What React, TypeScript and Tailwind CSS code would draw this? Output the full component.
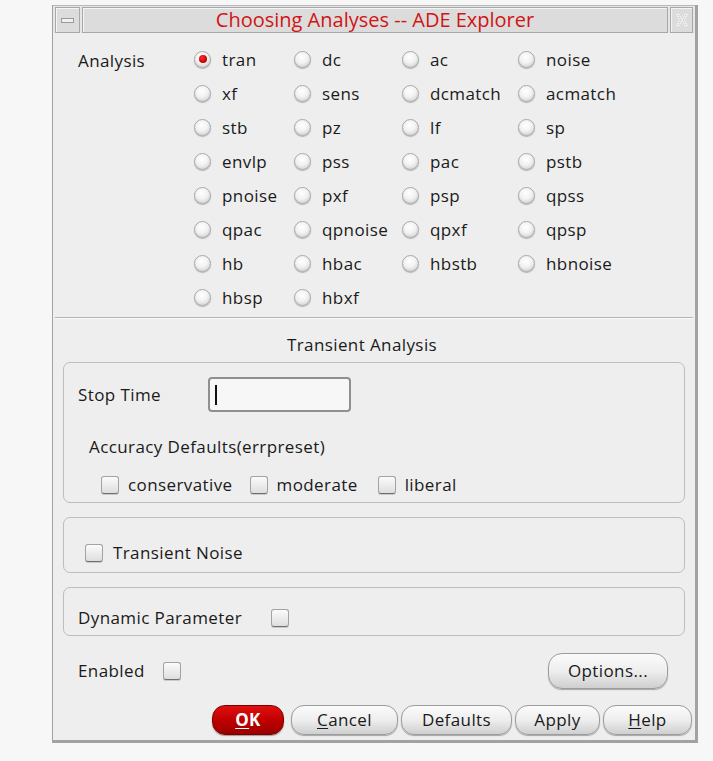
import React from "react";

const font = { fontFamily: '"Open Sans", "DejaVu Sans", sans-serif' };

const analyses = [
  ["tran", "dc", "ac", "noise"],
  ["xf", "sens", "dcmatch", "acmatch"],
  ["stb", "pz", "lf", "sp"],
  ["envlp", "pss", "pac", "pstb"],
  ["pnoise", "pxf", "psp", "qpss"],
  ["qpac", "qpnoise", "qpxf", "qpsp"],
  ["hb", "hbac", "hbstb", "hbnoise"],
  ["hbsp", "hbxf"],
];

const colWidths = ["w-[100px]", "w-[108px]", "w-[116px]", "w-[100px]"];

const Radio = ({ checked }: { checked?: boolean }) => (
  <span className="relative flex h-[17px] w-[17px] shrink-0 items-center justify-center rounded-full border border-[#a9a9a9] bg-[radial-gradient(circle_at_45%_35%,#ffffff_0%,#f2f2f2_45%,#c4c4c4_100%)] shadow-[0_1px_1px_rgba(0,0,0,0.25)]">
    {checked && (
      <span className="h-[8px] w-[8px] rounded-full bg-[radial-gradient(circle_at_40%_35%,#ff3030_0%,#d00000_60%,#900000_100%)]" />
    )}
  </span>
);

const Checkbox = () => (
  <span className="inline-block h-[18px] w-[18px] shrink-0 rounded-[3px] border border-[#a3a3a3] border-b-[#6f6f6f] bg-gradient-to-b from-[#fbfbfb] to-[#dedede] shadow-[0_1px_0_rgba(0,0,0,0.15)]" />
);

const Button = ({
  children,
  className = "",
}: {
  children: React.ReactNode;
  className?: string;
}) => (
  <button
    className={`flex h-[30px] items-center justify-center rounded-[13px] border border-[#9c9c9c] bg-gradient-to-b from-[#fbfbfb] via-[#eeeeee] to-[#cfcfcf] text-[17px] tracking-[0.4px] text-[#1a1a1a] shadow-[0_1px_1px_rgba(0,0,0,0.3)] ${className}`}
  >
    {children}
  </button>
);

export default function App() {
  return (
    <div className="min-h-screen bg-[#f7f7f7]" style={font}>
      <div className="ml-[52px] w-[646px] pt-[5px]">
        <div className="border-l border-r-[3px] border-b-[3px] border-[#a2a2a2] bg-[#eeeeee] tracking-[0.4px]">
          {/* title bar */}
          <div className="flex h-[28px] gap-[2px] border-t border-[#b8b8b8] bg-[#e6e6e6] px-[2px] pt-[1px]">
            <div className="flex w-[25px] items-center justify-center border border-[#a8a8a8] bg-[#dcdcdc] shadow-[inset_1px_1px_0_#f4f4f4]">
              <span className="h-[5px] w-[13px] border border-[#9a9a9a] bg-[#f0f0f0]" />
            </div>
            <div className="flex flex-1 items-center justify-center border border-[#a8a8a8] bg-[#dcdcdc] text-[20px] tracking-normal text-[#d11414] shadow-[inset_1px_1px_0_#f4f4f4]">
              Choosing Analyses -- ADE Explorer
            </div>
            <div className="flex w-[23px] items-center justify-center border border-[#a8a8a8] bg-[#dcdcdc] shadow-[inset_1px_1px_0_#f4f4f4]">
              <svg width="12" height="14" viewBox="0 0 12 14">
                <path d="M2 2 C5 5 5 9 2 12 M10 2 C7 5 7 9 10 12" stroke="#f4f4f4" strokeWidth="3" fill="none" strokeLinecap="round" />
                <path d="M2 2 C5 5 5 9 2 12 M10 2 C7 5 7 9 10 12" stroke="#b8b8b8" strokeWidth="1" fill="none" strokeDasharray="1.5 1" />
              </svg>
            </div>
          </div>

          {/* analysis radios */}
          <div className="flex pt-[9px]">
            <div className="w-[141px] pl-[25px] pt-[6px] text-[17px] text-[#1a1a1a]">Analysis</div>
            <div className="flex flex-col">
              {analyses.map((row, r) => (
                <div key={r} className="flex h-[34px] items-center">
                  {row.map((name, c) => (
                    <div key={name} className={`flex items-center gap-[11px] ${colWidths[c]}`}>
                      <Radio checked={name === "tran"} />
                      <span className="text-[17px] leading-none text-[#1a1a1a]">{name}</span>
                    </div>
                  ))}
                </div>
              ))}
            </div>
          </div>

          <div className="mx-[2px] mt-[3px] border-t border-[#b3b3b3] shadow-[0_1px_0_#fafafa]" />

          <div className="mt-[15px] flex h-[24px] items-center justify-center pr-[24px] text-[17px] text-[#1a1a1a]">
            Transient Analysis
          </div>

          {/* transient group */}
          <div className="mx-[10px] mt-[5px] flex h-[141px] flex-col rounded-[7px] border border-[#bdbdbd] pl-[14px] pt-[14px] text-[17px] text-[#1a1a1a]">
            <div className="flex items-center">
              <span className="w-[130px]">Stop Time</span>
              <div className="flex h-[35px] w-[143px] items-center rounded-[4px] border-2 border-[#8f8f8f] bg-[#f7f7f7] pl-[5px]">
                <span className="h-[20px] w-[2px] bg-[#111]" />
              </div>
            </div>
            <div className="mt-[23px] pl-[11px] leading-[24px]">Accuracy Defaults(errpreset)</div>
            <div className="mt-[15px] flex items-center pl-[23px] leading-[22px]">
              <Checkbox />
              <span className="ml-[9px] mr-[17px]">conservative</span>
              <Checkbox />
              <span className="ml-[9px] mr-[20px]">moderate</span>
              <Checkbox />
              <span className="ml-[9px]">liberal</span>
            </div>
          </div>

          {/* transient noise */}
          <div className="mx-[10px] mt-[14px] flex h-[56px] items-start rounded-[7px] border border-[#bdbdbd] pl-[21px] pt-[24px] text-[17px] text-[#1a1a1a]">
            <div className="flex items-center leading-[22px]">
              <Checkbox />
              <span className="ml-[10px]">Transient Noise</span>
            </div>
          </div>

          {/* dynamic parameter */}
          <div className="mx-[10px] mt-[14px] flex h-[49px] items-start rounded-[7px] border border-[#bdbdbd] pl-[14px] pt-[19px] text-[17px] text-[#1a1a1a]">
            <div className="flex items-center leading-[22px]">
              <span className="w-[193px]">Dynamic Parameter</span>
              <Checkbox />
            </div>
          </div>

          {/* enabled / options */}
          <div className="mt-[17px] flex h-[36px] items-center justify-between pl-[25px] pr-[27px] text-[17px] text-[#1a1a1a]">
            <div className="flex items-center">
              <span className="w-[85px]">Enabled</span>
              <Checkbox />
            </div>
            <Button className="h-[36px] w-[120px] rounded-[14px]">Options...</Button>
          </div>

          {/* bottom buttons */}
          <div className="mt-[16px] flex justify-end gap-[3px] pb-[5px] pr-[3px]">
            <button className="mr-[4px] flex h-[30px] w-[72px] items-center justify-center rounded-[13px] border border-[#7a0000] bg-gradient-to-b from-[#e01010] via-[#c00000] to-[#9a0000] text-[17px] font-bold text-white shadow-[0_1px_1px_rgba(0,0,0,0.35)]">
              <span className="underline underline-offset-2">O</span>K
            </button>
            <Button className="w-[107px]">
              <span className="underline underline-offset-2">C</span>ancel
            </Button>
            <Button className="w-[111px]">Defaults</Button>
            <Button className="w-[85px]">Apply</Button>
            <Button className="w-[89px]">
              <span className="underline underline-offset-2">H</span>elp
            </Button>
          </div>
        </div>
      </div>
    </div>
  );
}
